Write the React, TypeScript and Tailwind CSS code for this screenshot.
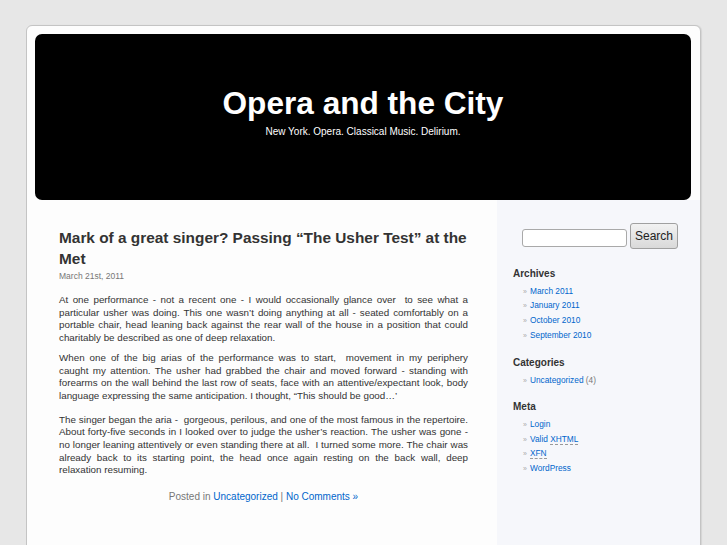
import React from "react";

const font = { fontFamily: '"Liberation Sans", Arial, Helvetica, sans-serif' };

function Item({ children }: { children: React.ReactNode }) {
  return (
    <li className="block h-[14.67px] pl-[10px] whitespace-nowrap">
      <span className="inline-block w-[7px] text-[7px] text-[#aaa]">»</span>
      {children}
    </li>
  );
}

function Widget({ title, children, className = "" }: { title: string; children: React.ReactNode; className?: string }) {
  return (
    <div className={className}>
      <h2 className="text-[10px] leading-[12px] font-bold text-[#333]">{title}</h2>
      <ul className="mt-[4px] text-[8.3px] leading-[14.67px] text-[#06c]">{children}</ul>
    </div>
  );
}

export default function App() {
  return (
    <div className="min-h-[545px] w-[727px] bg-[#e7e7e7] pt-[25px] overflow-hidden" style={font}>
      <div className="ml-[26px] w-[675px] border border-[#c4c4c4] rounded-t-[6px] bg-[#fdfdfd] shadow-[1px_0_1px_rgba(0,0,0,0.08)]">
        <header className="ml-[8px] mt-[8px] w-[656px] h-[166px] bg-black rounded-[7px] flex flex-col items-center pt-[54px]">
          <h1 className="text-[31.6px] leading-none font-bold text-white">Opera and the City</h1>
          <div className="mt-[7.5px] text-[10px] leading-none text-white">New York. Opera. Classical Music. Delirium.</div>
        </header>
        <div className="flex min-h-[360px]">
          <main className="w-[470px] pl-[32px] pt-[27px] bg-[#fdfdfd]">
            <div className="w-[409px]">
              <h2 className="text-[15.4px] leading-[21.3px] font-bold text-[#333]">
                Mark of a great singer? Passing “The Usher Test” at the Met
              </h2>
              <div className="mt-[1px] text-[8.5px] leading-[11px] text-[#777]">March 21st, 2011</div>
              <div className="mt-[12.5px] text-[9.8px] leading-[12.67px] text-[#333] text-justify">
                <p>
                  {"At one performance - not a recent one - I would occasionally glance over\u00a0 to see what a particular usher was doing. This one wasn’t doing anything at all - seated comfortably on a portable chair, head leaning back against the rear wall of the house in a position that could charitably be described as one of deep relaxation."}
                </p>
                <div className="mt-[7.3px]">
                  <p className="[text-align-last:justify]">
                    {"When one of the big arias of the performance was to start,\u00a0 movement in my periphery"}
                  </p>
                  <p>
                    {"caught my attention. The usher had grabbed the chair and moved forward - standing with forearms on the wall behind the last row of seats, face with an attentive/expectant look, body language expressing the same anticipation. I thought, “This should be good…’"}
                  </p>
                </div>
                <p className="mt-[11px]">
                  {"The singer began the aria -\u00a0 gorgeous, perilous, and one of the most famous in the repertoire. About forty-five seconds in I looked over to judge the usher’s reaction. The usher was gone - no longer leaning attentively or even standing there at all.\u00a0 I turned some more. The chair was already back to its starting point, the head once again resting on the back wall, deep relaxation resuming."}
                </p>
              </div>
              <div className="mt-[14px] text-center text-[10px] leading-[12.67px] text-[#777]">
                Posted in <span className="text-[#06c]">Uncategorized</span> | <span className="text-[#06c]">No Comments »</span>
              </div>
            </div>
          </main>
          <aside className="w-[203px] bg-[#f6f7fb] pt-[22.7px] pl-[16px]">
            <div className="flex items-start ml-[9px]">
              <div className="mt-[6px] w-[105px] h-[18px] bg-white border border-[#a9a9a9] rounded-[3px]" />
              <button className="ml-[3px] w-[48px] h-[26px] rounded-[3px] border border-[#a0a0a0] bg-gradient-to-b from-[#f2f2f2] to-[#d9d9d9] text-[12px] text-[#222]">
                Search
              </button>
            </div>
            <Widget title="Archives" className="mt-[19px]">
              <Item>March 2011</Item>
              <Item>January 2011</Item>
              <Item>October 2010</Item>
              <Item>September 2010</Item>
            </Widget>
            <Widget title="Categories" className="mt-[15px]">
              <Item>
                Uncategorized <span className="text-[#777]">(4)</span>
              </Item>
            </Widget>
            <Widget title="Meta" className="mt-[13px]">
              <Item>Login</Item>
              <Item>
                Valid <abbr className="no-underline border-b border-dashed border-[#999]">XHTML</abbr>
              </Item>
              <Item>
                <abbr className="no-underline border-b border-dashed border-[#999]">XFN</abbr>
              </Item>
              <Item>WordPress</Item>
            </Widget>
          </aside>
        </div>
      </div>
    </div>
  );
}
